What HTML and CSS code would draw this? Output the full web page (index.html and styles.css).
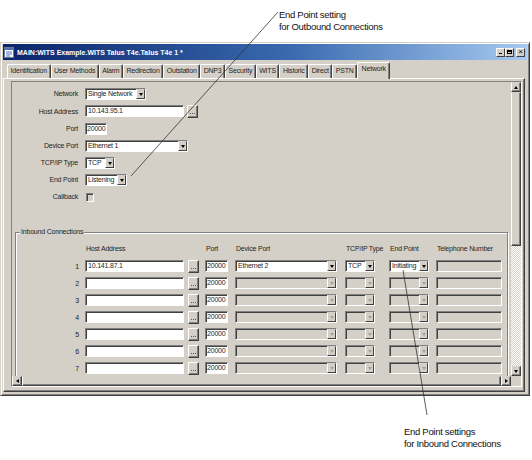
FILE: index.html
```html
<!DOCTYPE html>
<html lang="en">
<head>
    <meta charset="UTF-8">
    <title>WITS Talus T4e - Network</title>
    <link rel="stylesheet" href="styles.css">
</head>
<body>
<div class="page">
    <div class="note note-top">End Point setting<br>for Outbound Connections</div>

    <div class="window">
        <div class="titlebar">
            <svg class="app-icon" width="10" height="11" viewBox="0 0 10 11">
                <rect x="0.5" y="0.5" width="9" height="10" fill="#fff" stroke="#6b7a99"/>
                <rect x="1" y="1" width="8" height="2" fill="#4a6fb5"/>
                <path d="M2 5h6M2 7h6M2 9h4" stroke="#4a6fb5" stroke-width="1"/>
            </svg>
            <span class="title">MAIN:WITS Example.WITS Talus T4e.Talus T4e 1 *</span>
            <div class="win-btns">
                <span class="win-btn"><i class="g-min"></i></span>
                <span class="win-btn"><i class="g-max"></i></span>
                <span class="win-btn close">&times;</span>
            </div>
        </div>

        <div class="tabs">
            <span class="tab">Identification</span>
            <span class="tab">User Methods</span>
            <span class="tab">Alarm</span>
            <span class="tab">Redirection</span>
            <span class="tab">Outstation</span>
            <span class="tab">DNP3</span>
            <span class="tab">Security</span>
            <span class="tab">WITS</span>
            <span class="tab">Historic</span>
            <span class="tab">Direct</span>
            <span class="tab">PSTN</span>
            <span class="tab active">Network</span>
        </div>

        <div class="panel">
            <div class="scroller">
                <div class="viewport">
                    <div class="form">
                        <label>Network</label>
                        <div class="select w-network"><span>Single Network</span><i class="drop"></i></div>

                        <label>Host Address</label>
                        <div class="with-btn">
                            <div class="field w-host">10.143.95.1</div>
                            <span class="dots"><b></b><b></b><b></b></span>
                        </div>

                        <label>Port</label>
                        <div class="field w-port">20000</div>

                        <label>Device Port</label>
                        <div class="select w-device"><span>Ethernet 1</span><i class="drop"></i></div>

                        <label>TCP/IP Type</label>
                        <div class="select w-tcp"><span>TCP</span><i class="drop"></i></div>

                        <label>End Point</label>
                        <div class="select w-endpoint"><span>Listening</span><i class="drop"></i></div>

                        <label>Callback</label>
                        <span class="checkbox"></span>
                    </div>

                    <fieldset class="group">
                        <legend>Inbound Connections</legend>
                        <div class="conn-grid">
                            <span></span>
                            <span class="head">Host Address</span>
                            <span></span>
                            <span class="head">Port</span>
                            <span class="head">Device Port</span>
                            <span class="head">TCP/IP Type</span>
                            <span class="head">End Point</span>
                            <span class="head">Telephone Number</span>

                            <span class="num">1</span>
                            <div class="field c-host">10.141.87.1</div>
                            <span class="dots"><b></b><b></b><b></b></span>
                            <div class="field c-port">20000</div>
                            <div class="select c-device"><span>Ethernet 2</span><i class="drop"></i></div>
                            <div class="select c-tcp"><span>TCP</span><i class="drop"></i></div>
                            <div class="select c-ep"><span>Initiating</span><i class="drop"></i></div>
                            <div class="field c-tel off"></div>

                            <span class="num">2</span>
                            <div class="field c-host"></div>
                            <span class="dots"><b></b><b></b><b></b></span>
                            <div class="field c-port">20000</div>
                            <div class="select c-device off"><span></span><i class="drop"></i></div>
                            <div class="select c-tcp off"><span></span><i class="drop"></i></div>
                            <div class="select c-ep off"><span></span><i class="drop"></i></div>
                            <div class="field c-tel off"></div>

                            <span class="num">3</span>
                            <div class="field c-host"></div>
                            <span class="dots"><b></b><b></b><b></b></span>
                            <div class="field c-port">20000</div>
                            <div class="select c-device off"><span></span><i class="drop"></i></div>
                            <div class="select c-tcp off"><span></span><i class="drop"></i></div>
                            <div class="select c-ep off"><span></span><i class="drop"></i></div>
                            <div class="field c-tel off"></div>

                            <span class="num">4</span>
                            <div class="field c-host"></div>
                            <span class="dots"><b></b><b></b><b></b></span>
                            <div class="field c-port">20000</div>
                            <div class="select c-device off"><span></span><i class="drop"></i></div>
                            <div class="select c-tcp off"><span></span><i class="drop"></i></div>
                            <div class="select c-ep off"><span></span><i class="drop"></i></div>
                            <div class="field c-tel off"></div>

                            <span class="num">5</span>
                            <div class="field c-host"></div>
                            <span class="dots"><b></b><b></b><b></b></span>
                            <div class="field c-port">20000</div>
                            <div class="select c-device off"><span></span><i class="drop"></i></div>
                            <div class="select c-tcp off"><span></span><i class="drop"></i></div>
                            <div class="select c-ep off"><span></span><i class="drop"></i></div>
                            <div class="field c-tel off"></div>

                            <span class="num">6</span>
                            <div class="field c-host"></div>
                            <span class="dots"><b></b><b></b><b></b></span>
                            <div class="field c-port">20000</div>
                            <div class="select c-device off"><span></span><i class="drop"></i></div>
                            <div class="select c-tcp off"><span></span><i class="drop"></i></div>
                            <div class="select c-ep off"><span></span><i class="drop"></i></div>
                            <div class="field c-tel off"></div>

                            <span class="num">7</span>
                            <div class="field c-host"></div>
                            <span class="dots"><b></b><b></b><b></b></span>
                            <div class="field c-port">20000</div>
                            <div class="select c-device off"><span></span><i class="drop"></i></div>
                            <div class="select c-tcp off"><span></span><i class="drop"></i></div>
                            <div class="select c-ep off"><span></span><i class="drop"></i></div>
                            <div class="field c-tel off"></div>
                        </div>
                    </fieldset>
                </div>

                <div class="vscroll">
                    <span class="sb-btn"><i class="arr up"></i></span>
                    <span class="thumb v-thumb"></span>
                    <span class="track"></span>
                    <span class="sb-btn"><i class="arr down"></i></span>
                </div>
                <div class="hscroll">
                    <span class="sb-btn"><i class="arr left"></i></span>
                    <span class="thumb h-thumb"></span>
                    <span class="sb-btn"><i class="arr right"></i></span>
                </div>
                <div class="corner"></div>
            </div>
        </div>
    </div>

    <div class="note note-bottom">End Point settings<br>for Inbound Connections</div>

    <!-- callout leader lines drawn over the screenshot -->
    <svg class="leaders" width="532" height="460" viewBox="0 0 532 460">
        <line x1="278" y1="12" x2="131" y2="176" stroke="#333" stroke-width="0.8"/>
        <line x1="403" y1="270" x2="427" y2="415" stroke="#333" stroke-width="0.8"/>
    </svg>
</div>
</body>
</html>
```

FILE: styles.css
```css
body { margin: 0; background: #fff; font-family: "Liberation Sans", Arial, sans-serif; font-size: 7px; letter-spacing: -0.2px; color: #1e1e1e; }
.page { position: relative; width: 532px; height: 460px; overflow: hidden; }

/* annotations */
.note { font-size: 9.5px; letter-spacing: -0.3px; line-height: 12px; color: #111; }
.note-top { height: 42px; box-sizing: border-box; padding: 9px 0 0 279px; }
.note-bottom { padding: 30px 0 0 404px; line-height: 11.5px; }
.leaders { position: absolute; left: 0; top: 0; pointer-events: none; }

/* window frame */
.window { width: 530px; height: 354px; box-sizing: border-box; background: #d4d0c8; border: 1px solid; border-color: #d4d0c8 #404040 #404040 #d4d0c8; box-shadow: inset 1px 1px #fff, inset -1px -1px #808080; padding: 1px 2px 3px 2px; display: flex; flex-direction: column; }
.titlebar { height: 16px; flex: none; display: flex; align-items: center; padding: 0 2px 0 1px; background: linear-gradient(90deg, #0a246a, #3a6ab0 55%, #a6caf0); color: #fff; font-weight: bold; letter-spacing: 0; }
.app-icon { margin-right: 3px; }
.title { flex: 1; white-space: nowrap; }
.win-btns { display: flex; }
.win-btn { width: 9px; height: 9px; box-sizing: border-box; background: #d4d0c8; border: 1px solid; border-color: #fff #404040 #404040 #fff; color: #000; font-size: 8px; line-height: 6px; display: flex; align-items: center; justify-content: center; }
.win-btn.close { margin-left: 2px; font-weight: normal; }
.g-min { width: 3px; height: 1px; background: #000; margin-top: 3px; }
.g-max { width: 5px; height: 4px; border: 1px solid #000; border-top-width: 2px; box-sizing: border-box; }

/* tabs */
.tabs { height: 18px; flex: none; display: flex; align-items: flex-end; padding-left: 4px; }
.tab { height: 14px; box-sizing: border-box; padding: 0 2.5px; line-height: 12px; white-space: nowrap; border-top: 1px solid #fff; border-left: 1px solid #fff; border-right: 1px solid #404040; box-shadow: inset -1px 0 #808080; border-radius: 2px 2px 0 0; }
.tab.active { position: relative; height: 17px; margin-bottom: -1px; padding: 0 3.5px; line-height: 12px; background: #d4d0c8; }

/* tab page */
.panel { flex: 1; min-height: 0; display: flex; margin-right: 2px; border: 1px solid; border-color: #fff #404040 #404040 #fff; box-shadow: inset -1px -1px #808080; padding: 2px 2px 4px 7px; }
.scroller { flex: 1; min-height: 0; display: grid; grid-template-columns: minmax(0, 1fr) 10px; grid-template-rows: minmax(0, 1fr) 10px; border: 1px solid; border-color: #808080 #fff #fff #808080; }
.viewport { overflow: hidden; padding-top: 6px; min-width: 0; min-height: 0; }

/* top form */
.form { display: grid; grid-template-columns: 66px auto; column-gap: 7px; row-gap: 5px; justify-items: start; align-items: center; }
.form label { justify-self: end; line-height: 12px; white-space: nowrap; }
.with-btn { display: flex; gap: 3px; }

/* controls */
.field, .select { height: 12px; box-sizing: border-box; background: #fff; border: 1px solid; border-color: #808080 #fff #fff #808080; box-shadow: inset 1px 1px #404040; line-height: 10px; padding-left: 2px; white-space: nowrap; overflow: hidden; }
.select { display: flex; padding-left: 0; }
.select span { flex: 1; padding-left: 2px; }
.drop { width: 9px; flex: none; background: #d4d0c8; border: 1px solid; border-color: #d4d0c8 #404040 #404040 #fff; box-sizing: border-box; display: flex; align-items: center; justify-content: center; }
.drop::after { content: ""; border-left: 2.5px solid transparent; border-right: 2.5px solid transparent; border-top: 3px solid #000; }
.off { background: #d4d0c8; }
.off .drop::after { border-top-color: #a4a09a; }
.dots { width: 11px; height: 13px; box-sizing: border-box; background: #d4d0c8; border: 1px solid; border-color: #fff #404040 #404040 #fff; box-shadow: inset -1px -1px #808080; display: flex; align-items: flex-end; justify-content: center; gap: 1px; padding-bottom: 3px; }
.dots b { width: 1px; height: 1px; background: #555; }
.checkbox { width: 8px; height: 9px; box-sizing: border-box; margin-left: 1px; background: #d4d0c8; border: 1px solid; border-color: #808080 #fff #fff #808080; box-shadow: inset 1px 1px #404040; }

.w-network { width: 61px; }
.w-host { width: 99px; }
.w-port { width: 22px; padding-left: 1px; }
.w-device { width: 103px; }
.w-tcp { width: 30px; }
.w-endpoint { width: 42px; }

/* inbound connections group */
.group { margin: 24px 3px 0 3px; padding: 0; min-width: 0; border: 1px solid #808080; box-shadow: 1px 1px 0 #fff, inset 1px 1px 0 #fff; }
.group legend { margin-left: 4px; padding: 0 1px; line-height: 10px; background: #d4d0c8; }
.conn-grid { display: grid; grid-template-columns: 69px 103px 17px 30px 110px 44px 47px 66px; grid-auto-rows: 12px; row-gap: 5px; align-items: center; justify-items: start; margin-top: 6px; padding-bottom: 6px; }
.head { padding-left: 1px; line-height: 12px; white-space: nowrap; }
.num { justify-self: end; padding-right: 6px; }
.c-host { width: 99px; }
.c-port { width: 23px; padding-left: 1px; }
.c-device { width: 102px; }
.c-tcp { width: 30px; }
.c-ep { width: 40px; }
.c-tel { width: 66px; }
.conn-grid .dots { margin-top: 1px; }

/* scroll bars */
.vscroll { display: flex; flex-direction: column; min-height: 0; }
.hscroll { display: flex; }
.sb-btn { width: 10px; height: 10px; flex: none; box-sizing: border-box; background: #d4d0c8; border: 1px solid; border-color: #d4d0c8 #404040 #404040 #fff; box-shadow: inset -1px -1px #808080; display: flex; align-items: center; justify-content: center; }
.thumb { box-sizing: border-box; background: #d4d0c8; border: 1px solid; border-color: #d4d0c8 #404040 #404040 #fff; box-shadow: inset -1px -1px #808080; }
.v-thumb { height: 154px; flex: none; }
.h-thumb { flex: 1; }
.track { flex: 1; background: repeating-conic-gradient(#fff 0 25%, #d4d0c8 0 50%) 0 0 / 2px 2px; }
.corner { background: #d4d0c8; }
.arr { width: 0; height: 0; }
.arr.up { border-left: 2.5px solid transparent; border-right: 2.5px solid transparent; border-bottom: 3px solid #000; }
.arr.down { border-left: 2.5px solid transparent; border-right: 2.5px solid transparent; border-top: 3px solid #000; }
.arr.left { border-top: 2.5px solid transparent; border-bottom: 2.5px solid transparent; border-right: 3px solid #000; }
.arr.right { border-top: 2.5px solid transparent; border-bottom: 2.5px solid transparent; border-left: 3px solid #000; }
```
